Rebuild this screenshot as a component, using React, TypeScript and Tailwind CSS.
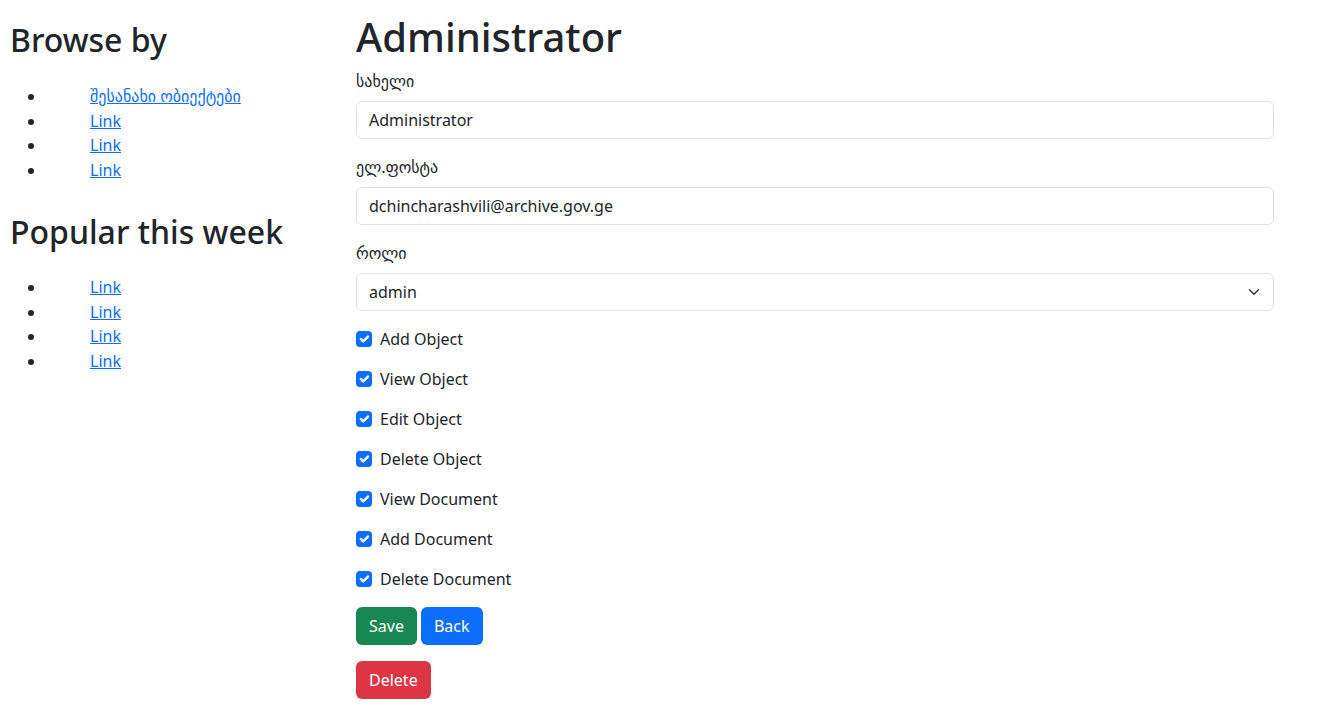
import React from "react";

// Bootstrap-like admin user edit page

const FONT = { fontFamily: '"Noto Sans", "DejaVu Sans", "Liberation Sans", sans-serif' };

const PERMISSIONS = [
  "Add Object",
  "View Object",
  "Edit Object",
  "Delete Object",
  "View Document",
  "Add Document",
  "Delete Document",
];

function LinkList({ items }: { items: string[] }) {
  return (
    <ul className="list-disc pl-[36px] mb-[31px]">
      {items.map((label, i) => (
        <li key={i} className="leading-[24.4px] text-base">
          <a href="#" className="ml-[44px] text-[#0d6efd] underline">
            {label}
          </a>
        </li>
      ))}
    </ul>
  );
}

function Field({ label, value }: { label: string; value: string }) {
  return (
    <div className="mb-4">
      <label className="block mb-2 leading-6">{label}</label>
      <input
        type="text"
        defaultValue={value}
        className="block w-full h-[38px] px-3 py-[6px] border border-[#dee2e6] rounded-[6px] text-base leading-6 text-[#212529] outline-none"
      />
    </div>
  );
}

function CheckRow({ label }: { label: string }) {
  return (
    <div className="flex items-start mb-4 h-6">
      <span className="mt-1 w-4 h-4 rounded-[4px] bg-[#0d6efd] flex items-center justify-center shrink-0">
        <svg viewBox="0 0 20 20" className="w-4 h-4">
          <path d="m6 10 3 3 6-6" fill="none" stroke="#fff" strokeWidth="3" strokeLinecap="round" strokeLinejoin="round" />
        </svg>
      </span>
      <span className="ml-2 leading-6">{label}</span>
    </div>
  );
}

export default function App() {
  return (
    <div className="flex min-h-screen bg-white text-[#212529] text-base" style={FONT}>
      {/* Sidebar */}
      <aside className="w-[356px] shrink-0 pl-[10px] pt-[21px]">
        <h2 className="text-[32px] leading-[1.2] font-medium mb-[25px]">Browse by</h2>
        <LinkList items={["შესანახი ობიექტები", "Link", "Link", "Link"]} />
        <h2 className="text-[32px] leading-[1.2] font-medium mb-[24px]">Popular this week</h2>
        <LinkList items={["Link", "Link", "Link", "Link"]} />
      </aside>

      {/* Main form */}
      <main className="flex-1 pr-[47px] pt-[13px]">
        <h1 className="text-[40px] leading-[1.2] font-medium mb-2">Administrator</h1>
        <Field label="სახელი" value="Administrator" />
        <Field label="ელ.ფოსტა" value="dchincharashvili@archive.gov.ge" />
        <div className="mb-4">
          <label className="block mb-2 leading-6">როლი</label>
          <div className="relative">
            <select
              defaultValue="admin"
              className="block w-full h-[38px] pl-3 pr-9 py-[6px] border border-[#dee2e6] rounded-[6px] text-base leading-6 text-[#212529] bg-white appearance-none outline-none"
            >
              <option value="admin">admin</option>
              <option value="user">user</option>
            </select>
            <svg viewBox="0 0 16 16" className="absolute right-3 top-[13px] w-4 h-3 pointer-events-none" preserveAspectRatio="xMidYMid meet">
              <path d="m2 5 6 6 6-6" fill="none" stroke="#343a40" strokeWidth="2" strokeLinecap="round" strokeLinejoin="round" />
            </svg>
          </div>
        </div>

        {PERMISSIONS.map((p) => (
          <CheckRow key={p} label={p} />
        ))}

        <div className="flex gap-1 mb-4">
          <button className="h-[38px] px-3 border border-transparent rounded-[6px] bg-[#198754] text-white leading-6">Save</button>
          <button className="h-[38px] px-3 border border-transparent rounded-[6px] bg-[#0d6efd] text-white leading-6">Back</button>
        </div>
        <div>
          <button className="h-[38px] px-3 border border-transparent rounded-[6px] bg-[#dc3545] text-white leading-6">Delete</button>
        </div>
      </main>
    </div>
  );
}
